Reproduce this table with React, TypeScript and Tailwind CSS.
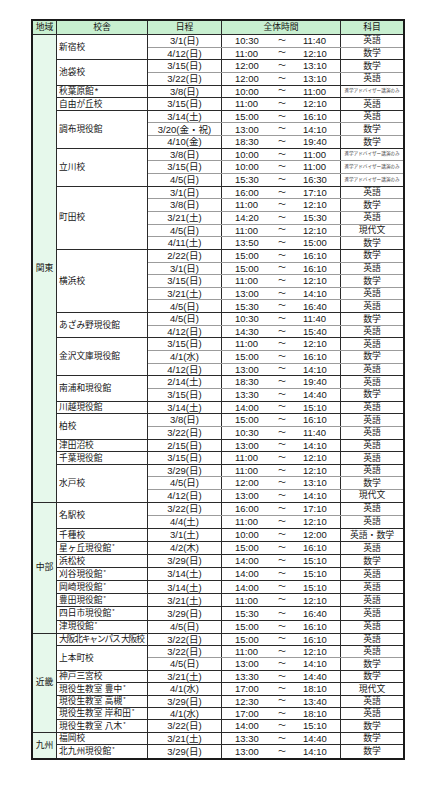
import React from "react";

type Session = [string, string, string, string];

type School = {
	name: string;
	mark?: "sup" | "plain";
	tight?: boolean;
	sessions: Session[];
};

type Region = {
	name: string;
	rowH: string;
	schools: School[];
};

const ADV = "進学アドバイザー講演のみ";

const regions: Region[] = [
	{
		name: "関東",
		rowH: "h-[12.65px]",
		schools: [
			{ name: "新宿校", sessions: [["3/1(日)", "10:30", "11:40", "英語"], ["4/12(日)", "11:00", "12:10", "数学"]] },
			{ name: "池袋校", sessions: [["3/15(日)", "12:00", "13:10", "数学"], ["3/22(日)", "12:00", "13:10", "英語"]] },
			{ name: "秋葉原館", mark: "plain", sessions: [["3/8(日)", "10:00", "11:00", ADV]] },
			{ name: "自由が丘校", sessions: [["3/15(日)", "11:00", "12:10", "英語"]] },
			{
				name: "調布現役館",
				sessions: [
					["3/14(土)", "15:00", "16:10", "英語"],
					["3/20(金・祝)", "13:00", "14:10", "数学"],
					["4/10(金)", "18:30", "19:40", "数学"],
				],
			},
			{
				name: "立川校",
				sessions: [
					["3/8(日)", "10:00", "11:00", ADV],
					["3/15(日)", "10:00", "11:00", ADV],
					["4/5(日)", "15:30", "16:30", ADV],
				],
			},
			{
				name: "町田校",
				sessions: [
					["3/1(日)", "16:00", "17:10", "英語"],
					["3/8(日)", "11:00", "12:10", "数学"],
					["3/21(土)", "14:20", "15:30", "英語"],
					["4/5(日)", "11:00", "12:10", "現代文"],
					["4/11(土)", "13:50", "15:00", "数学"],
				],
			},
			{
				name: "横浜校",
				sessions: [
					["2/22(日)", "15:00", "16:10", "数学"],
					["3/1(日)", "15:00", "16:10", "英語"],
					["3/15(日)", "11:00", "12:10", "数学"],
					["3/21(土)", "13:00", "14:10", "英語"],
					["4/5(日)", "15:30", "16:40", "英語"],
				],
			},
			{ name: "あざみ野現役館", sessions: [["4/5(日)", "10:30", "11:40", "数学"], ["4/12(日)", "14:30", "15:40", "英語"]] },
			{
				name: "金沢文庫現役館",
				sessions: [
					["3/15(日)", "11:00", "12:10", "英語"],
					["4/1(水)", "15:00", "16:10", "数学"],
					["4/12(日)", "13:00", "14:10", "英語"],
				],
			},
			{ name: "南浦和現役館", sessions: [["2/14(土)", "18:30", "19:40", "英語"], ["3/15(日)", "13:30", "14:40", "数学"]] },
			{ name: "川越現役館", sessions: [["3/14(土)", "14:00", "15:10", "英語"]] },
			{ name: "柏校", sessions: [["3/8(日)", "15:00", "16:10", "英語"], ["3/22(日)", "10:30", "11:40", "英語"]] },
			{ name: "津田沼校", sessions: [["2/15(日)", "13:00", "14:10", "英語"]] },
			{ name: "千葉現役館", sessions: [["3/15(日)", "11:00", "12:10", "英語"]] },
			{
				name: "水戸校",
				sessions: [
					["3/29(日)", "11:00", "12:10", "英語"],
					["4/5(日)", "12:00", "13:10", "数学"],
					["4/12(日)", "13:00", "14:10", "現代文"],
				],
			},
		],
	},
	{
		name: "中部",
		rowH: "h-[13.1px]",
		schools: [
			{ name: "名駅校", sessions: [["3/22(日)", "16:00", "17:10", "英語"], ["4/4(土)", "11:00", "12:10", "英語"]] },
			{ name: "千種校", sessions: [["3/1(土)", "10:00", "12:00", "英語・数学"]] },
			{ name: "星ヶ丘現役館", mark: "sup", sessions: [["4/2(木)", "15:00", "16:10", "英語"]] },
			{ name: "浜松校", sessions: [["3/29(日)", "14:00", "15:10", "数学"]] },
			{ name: "刈谷現役館", mark: "sup", sessions: [["3/14(土)", "14:00", "15:10", "英語"]] },
			{ name: "岡崎現役館", mark: "sup", sessions: [["3/14(土)", "14:00", "15:10", "英語"]] },
			{ name: "豊田現役館", mark: "sup", sessions: [["3/21(土)", "11:00", "12:10", "英語"]] },
			{ name: "四日市現役館", mark: "sup", sessions: [["3/29(日)", "15:30", "16:40", "英語"]] },
			{ name: "津現役館", mark: "sup", sessions: [["4/5(日)", "15:00", "16:10", "英語"]] },
		],
	},
	{
		name: "近畿",
		rowH: "h-[12.4px]",
		schools: [
			{ name: "大阪北キャンパス 大阪校", tight: true, sessions: [["3/22(日)", "15:00", "16:10", "英語"]] },
			{ name: "上本町校", sessions: [["3/22(日)", "11:00", "12:10", "英語"], ["4/5(日)", "13:00", "14:10", "数学"]] },
			{ name: "神戸三宮校", sessions: [["3/21(土)", "13:30", "14:40", "数学"]] },
			{ name: "現役生教室 豊中", mark: "sup", sessions: [["4/1(水)", "17:00", "18:10", "現代文"]] },
			{ name: "現役生教室 高槻", mark: "sup", sessions: [["3/29(日)", "12:30", "13:40", "英語"]] },
			{ name: "現役生教室 岸和田", mark: "sup", sessions: [["4/1(水)", "17:00", "18:10", "英語"]] },
			{ name: "現役生教室 八木", mark: "sup", sessions: [["3/22(日)", "14:00", "15:10", "数学"]] },
		],
	},
	{
		name: "九州",
		rowH: "h-[12.5px]",
		schools: [
			{ name: "福岡校", sessions: [["3/21(土)", "13:30", "14:40", "数学"]] },
			{ name: "北九州現役館", mark: "sup", sessions: [["3/29(日)", "13:00", "14:10", "数学"]] },
		],
	},
];

const DARK = "border-[#2a2a2a]";
const GRAY = "border-[#9c9c9c]";

export default function App() {
	return (
		<div
			className="min-h-screen bg-white pt-[19px] pl-[31px] text-[9.5px] leading-none text-[#151515]"
			style={{ fontFamily: '"Liberation Sans", "Noto Sans CJK JP", sans-serif' }}
		>
			<div className="w-[374px] border-2 border-[#1a1a1a]">
				{/* Header */}
				<div className={`flex h-[14px] border-b ${DARK} bg-[#c8efd0] text-[8.8px]`}>
					<div className={`flex w-[24px] items-center justify-center border-r ${DARK}`}>地域</div>
					<div className={`flex w-[91px] items-center justify-center border-r ${DARK}`}>校舎</div>
					<div className={`flex w-[74px] items-center justify-center border-r ${DARK}`}>日程</div>
					<div className={`flex w-[119px] items-center justify-center border-r ${DARK}`}>全体時間</div>
					<div className="flex flex-1 items-center justify-center">科目</div>
				</div>

				{regions.map((region, ri) => {
					const lastRegion = ri === regions.length - 1;
					return (
						<div key={region.name} className="flex">
							<div
								className={`flex w-[24px] shrink-0 items-center justify-center border-r ${DARK} bg-[#e6f8eb] text-[8.8px] ${
									lastRegion ? "" : `border-b ${DARK}`
								}`}
							>
								{region.name}
							</div>
							<div className="flex flex-1 flex-col">
								{region.schools.map((school, si) => {
									const lastSchool = si === region.schools.length - 1;
									const closing = !(lastSchool && lastRegion);
									return (
										<div key={school.name} className="flex">
											<div
												className={`flex w-[91px] shrink-0 items-center whitespace-nowrap border-r ${DARK} pl-[2px] text-[8.7px] ${
													school.tight ? "tracking-[-1.1px]" : ""
												} ${closing ? `border-b ${DARK}` : ""}`}
											>
												<span>
													{school.name}
													{school.mark === "plain" && <span className="ml-[1px]">*</span>}
													{school.mark === "sup" && (
														<span className="relative -top-[3px] ml-[1px] text-[6px]">*</span>
													)}
												</span>
											</div>
											<div className="flex flex-1 flex-col">
												{school.sessions.map((s, i) => {
													const lastSession = i === school.sessions.length - 1;
													let line = `border-b ${GRAY}`;
													if (lastSession) line = closing ? `border-b ${DARK}` : "";
													return (
														<div key={i} className={`flex ${region.rowH} ${line}`}>
															<div className={`flex w-[74px] shrink-0 items-center justify-center border-r ${DARK}`}>
																{s[0]}
															</div>
															<div className={`flex w-[119px] shrink-0 items-center border-r ${DARK} pl-[13px]`}>
																<span className="w-[42px]">{s[1]}</span>
																<span className="w-[10px] text-center text-[8px]">～</span>
																<span className="ml-[16px]">{s[2]}</span>
															</div>
															<div className="flex flex-1 items-center justify-center whitespace-nowrap text-[8.8px]">
																{s[3] === ADV ? (
																	<span className="text-[4.6px] text-[#444]">{s[3]}</span>
																) : (
																	s[3]
																)}
															</div>
														</div>
													);
												})}
											</div>
										</div>
									);
								})}
							</div>
						</div>
					);
				})}
			</div>
		</div>
	);
}
